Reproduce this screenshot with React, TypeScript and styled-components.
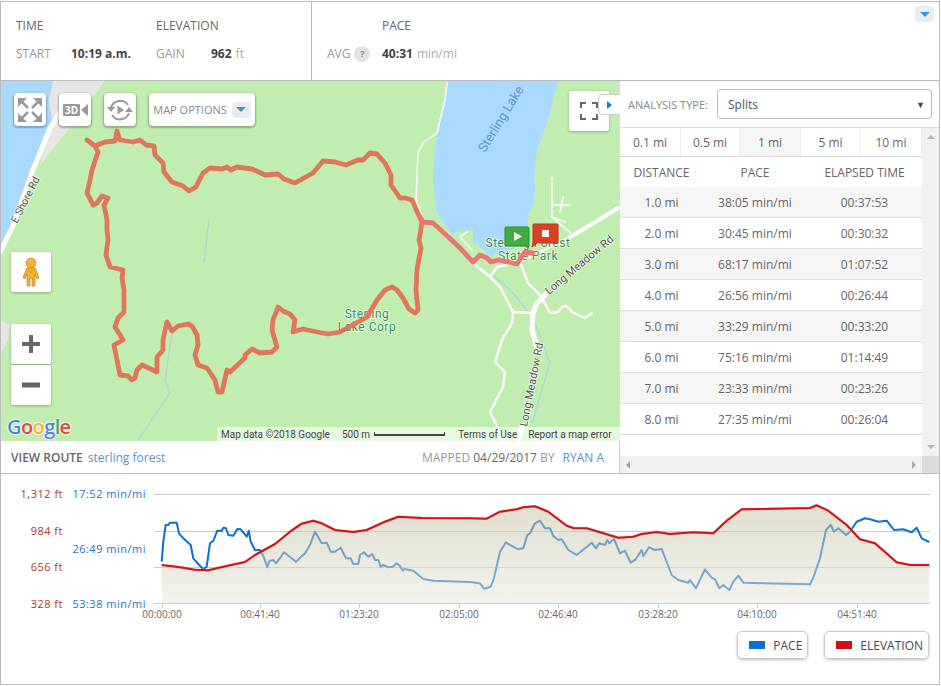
import styled, { createGlobalStyle } from "styled-components";

const splits = [
  ["1.0 mi", "38:05 min/mi", "00:37:53"],
  ["2.0 mi", "30:45 min/mi", "00:30:32"],
  ["3.0 mi", "68:17 min/mi", "01:07:52"],
  ["4.0 mi", "26:56 min/mi", "00:26:44"],
  ["5.0 mi", "33:29 min/mi", "00:33:20"],
  ["6.0 mi", "75:16 min/mi", "01:14:49"],
  ["7.0 mi", "23:33 min/mi", "00:23:26"],
  ["8.0 mi", "27:35 min/mi", "00:26:04"],
];

const tabs = ["0.1 mi", "0.5 mi", "1 mi", "5 mi", "10 mi"];
const ticks: [number, string][] = [
  [162, "00:00:00"],
  [260, "00:41:40"],
  [359, "01:23:20"],
  [459, "02:05:00"],
  [558, "02:46:40"],
  [658, "03:28:20"],
  [757, "04:10:00"],
  [857, "04:51:40"],
];

const trail =
  "M87 140 L95 146 L105 142 L115 141 L117 131 L120 140 L133 142 L140 140 L146 145 L154 146 L155 155 L163 163 L164 172 L172 182 L183 186 L189 191 L196 187 L203 173 L210 168 L222 169 L227 167 L231 170 L237 167 L252 169 L265 175 L278 174 L284 179 L295 183 L304 178 L313 173 L323 161 L335 162 L346 165 L358 160 L363 160 L370 153 L377 154 L385 163 L391 175 L391 185 L400 198 L405 198 L412 200 L420 218 L422 222 L420 235 L419 240 L421 248 L417 270 L416 290 L417 300 L418 310 L415 313 L409 309 L403 298 L397 290 L392 287 L385 290 L377 300 L367 317 L340 332 L328 334 L317 332 L303 329 L293 332 L295 320 L290 314 L283 311 L278 307 L273 320 L272 330 L277 347 L272 352 L260 353 L252 349 L245 355 L245 358 L230 372 L227 370 L222 392 L218 392 L215 380 L207 368 L198 365 L195 355 L198 345 L197 335 L192 326 L188 324 L178 326 L172 331 L167 322 L163 340 L163 350 L157 357 L157 372 L142 365 L137 370 L135 378 L132 380 L128 376 L120 375 L115 350 L114 345 L123 340 L115 327 L118 318 L124 312 L124 290 L122 278 L123 270 L110 267 L106 255 L108 240 L107 230 L107 220 L104 205 L108 198 L102 196 L97 203 L93 205 L87 193 L90 180 L92 170 L98 152 L95 146";
const trailEnd =
  "M420 217 L423 222 L433 223 L443 232 L460 248 L473 262 L480 255 L487 258 L491 262 L498 260 L517 264 L523 255 L525 252 L533 253";

const elevationPts = [
  [485, 255], [540, 262], [585, 269], [625, 271], [650, 265], [690, 256], [735, 246], [765, 225], [825, 192], [870, 155], [905, 131], [940, 122], [965, 130], [1005, 150], [1060, 156], [1100, 150], [1155, 125], [1195, 110], [1265, 114], [1410, 115],
  [1460, 116], [1500, 95], [1550, 88], [1570, 82], [1605, 79], [1645, 95], [1700, 137], [1720, 144], [1760, 145], [1810, 160], [1855, 173], [1900, 170], [1925, 162], [1970, 156], [2010, 162], [2080, 157], [2140, 160], [2180, 122], [2225, 88], [2430, 84], [2450, 76], [2485, 92], [2540, 135], [2580, 178], [2625, 190], [2690, 247], [2730, 255], [2788, 255],
];
const pacePts = [
  [485, 245], [490, 185], [497, 135], [505, 135], [510, 128], [530, 128], [537, 160], [550, 175], [572, 195], [580, 235], [595, 252], [610, 268], [620, 260], [630, 190], [640, 183], [652, 152], [665, 152], [670, 143], [678, 145], [685, 165], [700, 167], [712, 147], [722, 148], [732, 160], [740, 170], [746, 152], [752, 185], [765, 210], [780, 210], [790, 228], [802, 262], [808, 243], [820, 240], [828, 250], [852, 217], [875, 235], [888, 245], [915, 220], [930, 195], [945, 155], [965, 190], [980, 188], [992, 215], [1005, 215], [1022, 203], [1038, 235], [1052, 235], [1060, 252], [1075, 252], [1080, 225], [1092, 217], [1105, 230], [1117, 222], [1125, 240], [1135, 240], [1142, 260], [1150, 255], [1165, 262], [1178, 260], [1190, 250], [1200, 258], [1208, 272], [1212, 267], [1240, 272], [1270, 297], [1300, 302], [1410, 306],
  [1440, 310], [1452, 326], [1472, 320], [1482, 295], [1500, 215], [1518, 187], [1530, 195], [1555, 208], [1570, 205], [1582, 165], [1590, 160], [1605, 130], [1620, 122], [1635, 145], [1650, 145], [1660, 168], [1675, 180], [1685, 178], [1705, 210], [1730, 225], [1755, 205], [1775, 188], [1788, 205], [1798, 190], [1815, 195], [1822, 180], [1828, 190], [1842, 177], [1860, 220], [1875, 212], [1892, 248], [1907, 238], [1925, 210], [1930, 228], [1947, 202], [1965, 210], [1985, 207], [2015, 285], [2035, 300], [2065, 308], [2070, 300], [2088, 325], [2115, 268], [2135, 293], [2145, 298], [2158, 325], [2170, 315], [2188, 330], [2200, 305], [2215, 287], [2230, 308], [2430, 313], [2440, 293], [2460, 235], [2478, 150], [2492, 135], [2502, 155], [2515, 145], [2538, 165], [2550, 155], [2570, 125], [2595, 115], [2610, 118], [2635, 125], [2660, 122], [2682, 150], [2710, 148], [2735, 157], [2750, 143], [2765, 175], [2788, 186],
];

// points were read off a 3x crop of the chart, so scale them back down
const toPath = (pts: number[][]) =>
  pts
    .map(([x, y], i) => `${i ? "L" : "M"}${(x / 3).toFixed(1)} ${(480 + y / 3).toFixed(1)}`)
    .join(" ");

const GlobalStyle = createGlobalStyle`
  body {
    margin: 0;
    padding-top: 1px;
    background: #fff;
    font-family: "Open Sans", sans-serif;
    color: #666;
  }
`;

const Frame = styled.div`
  position: relative;
  width: 940px;
  height: 684px;
  box-sizing: border-box;
  border: 1px solid #bbb;
  display: flex;
  flex-direction: column;
`;

const TopBar = styled.div`
  display: flex;
  height: 79px;
  box-sizing: border-box;
  border-bottom: 1px solid #bbb;
`;

const StatGroup = styled.div<{ $width?: number }>`
  display: flex;
  box-sizing: border-box;
  width: ${(p) => (p.$width ? `${p.$width}px` : "auto")};
  flex: ${(p) => (p.$width ? "none" : 1)};
  border-right: ${(p) => (p.$width ? "1px solid #bbb" : "none")};
  padding-top: 15px;
  padding-left: 15px;
`;

const StatColumn = styled.div<{ $width: number }>`
  width: ${(p) => p.$width}px;
  display: flex;
  flex-direction: column;
  gap: 11px;
`;

const StatHead = styled.div<{ $indent?: number }>`
  font-size: 12px;
  line-height: 17px;
  margin-left: ${(p) => p.$indent ?? 0}px;
  color: #666;
`;

const StatRow = styled.div`
  display: flex;
  align-items: center;
  font-size: 12px;
  line-height: 17px;
`;

const StatLabel = styled.span`
  width: 55px;
  color: #999;
  display: flex;
  align-items: center;
  gap: 4px;
`;

const StatValue = styled.span`
  color: #444;
  font-weight: 700;
`;

const StatUnit = styled.span`
  color: #aaa;
  margin-left: 4px;
`;

const Help = styled.span`
  width: 16px;
  height: 16px;
  border-radius: 50%;
  background: #e2e2e2;
  color: #888;
  font-size: 9px;
  font-weight: 700;
  text-align: center;
  line-height: 15px;
`;

const ChevronChip = styled.div<{ $corner?: boolean }>`
  width: 19px;
  height: 16px;
  border-radius: 4px;
  background: #e9edf0;
  display: flex;
  align-items: center;
  justify-content: center;
  ${(p) => (p.$corner ? "position: absolute; top: 4px; right: 5px;" : "")}

  &::after {
    content: "";
    border-left: 5px solid transparent;
    border-right: 5px solid transparent;
    border-top: 5px solid #3a97d4;
  }
`;

const MiddleRow = styled.div`
  display: flex;
  height: 393px;
  box-sizing: border-box;
  border-bottom: 1px solid #bbb;
`;

const LeftColumn = styled.div`
  width: 619px;
  display: flex;
  flex-direction: column;
`;

const MapArea = styled.div`
  position: relative;
  width: 619px;
  height: 360px;
  overflow: hidden;
  background: #c1eeb0;
`;

const MapDrawing = styled.svg`
  display: block;
`;

const MapButtons = styled.div`
  position: absolute;
  top: 12px;
  left: 13px;
  display: flex;
  gap: 13px;
`;

const MapButton = styled.div`
  height: 33px;
  min-width: 32px;
  box-sizing: border-box;
  background: #fff;
  border-radius: 4px;
  box-shadow: 0 1px 2px 1px rgba(0, 0, 0, 0.28);
  display: flex;
  align-items: center;
  justify-content: center;
  gap: 5px;
  font-size: 11px;
  color: #888;
`;

const OptionsButton = styled(MapButton)`
  width: 106px;
`;

const ControlBox = styled.div<{ $top: number; $left: number }>`
  position: absolute;
  top: ${(p) => p.$top}px;
  left: ${(p) => p.$left}px;
  width: 40px;
  height: 40px;
  background: #fff;
  border-radius: 2px;
  box-shadow: 0 1px 3px rgba(0, 0, 0, 0.3);
  display: flex;
  align-items: center;
  justify-content: center;
`;

const ZoomStack = styled.div`
  position: absolute;
  top: 243px;
  left: 10px;
  display: flex;
  flex-direction: column;
  gap: 1px;
`;

const ZoomButton = styled.div`
  width: 40px;
  height: 40px;
  background: #fff;
  border-radius: 2px;
  box-shadow: 0 1px 3px rgba(0, 0, 0, 0.3);
  display: flex;
  align-items: center;
  justify-content: center;
`;

const PanelTab = styled.div`
  position: absolute;
  top: 13px;
  right: 0;
  width: 22px;
  height: 21px;
  box-sizing: border-box;
  background: #fff;
  border: 1px solid #ccc;
  border-right: none;
  border-radius: 5px 0 0 5px;
  padding-left: 8px;
  display: flex;
  align-items: center;

  &::after {
    content: "";
    border-top: 4px solid transparent;
    border-bottom: 4px solid transparent;
    border-left: 5px solid #1a7fb0;
  }
`;

const GoogleLogo = styled.div`
  position: absolute;
  left: 6px;
  bottom: 1px;
  font-family: "Open Sans", sans-serif;
  font-size: 20px;
  line-height: 26px;
  font-weight: 600;
  letter-spacing: -0.6px;
  text-shadow: 0 0 2px #fff, 0 0 2px #fff, 0 0 2px #fff;
`;

const LogoLetter = styled.span<{ $color: string }>`
  color: ${(p) => p.$color};
`;

const Attribution = styled.div`
  position: absolute;
  right: 0;
  bottom: 0;
  width: 403px;
  height: 14px;
  box-sizing: border-box;
  padding-left: 4px;
  background: rgba(255, 255, 255, 0.6);
  display: flex;
  align-items: center;
  font-family: Roboto, sans-serif;
  font-size: 10px;
  color: #444;
  white-space: nowrap;
`;

const AttributionPart = styled.span<{ $width: number }>`
  width: ${(p) => p.$width}px;
  flex: none;
`;

const ScaleBar = styled.span`
  width: 71px;
  height: 4px;
  flex: none;
  margin: 0 13px 0 4px;
  box-sizing: border-box;
  border: 1px solid #444;
  border-top: none;
  border-bottom-width: 2px;
`;

const RouteBar = styled.div`
  flex: 1;
  display: flex;
  align-items: center;
  justify-content: space-between;
  padding: 0 15px 0 10px;
  border-right: 1px solid #ccc;
  font-size: 12px;
`;

const RouteTitle = styled.span`
  color: #666;
  font-weight: 600;
  margin-right: 5px;
`;

const BlueLink = styled.span<{ $gap?: number }>`
  color: #5a93c8;
  margin-left: ${(p) => p.$gap ?? 0}px;
`;

const Muted = styled.span`
  color: #999;
`;

const RightColumn = styled.div`
  width: 319px;
  display: flex;
  flex-direction: column;
`;

const AnalysisRow = styled.div`
  height: 47px;
  flex: none;
  box-sizing: border-box;
  display: flex;
  align-items: center;
  border-bottom: 1px solid #ddd;
  padding: 0 7px 0 8px;
  gap: 8px;
`;

const AnalysisLabel = styled.span`
  font-size: 11px;
  color: #888;
  white-space: nowrap;
  width: 81px;
`;

const SelectBox = styled.div`
  flex: 1;
  height: 30px;
  box-sizing: border-box;
  border: 1px solid #bbb;
  border-radius: 4px;
  display: flex;
  align-items: center;
  justify-content: space-between;
  padding: 0 6px 0 10px;
  font-size: 12px;
  color: #555;
`;

const SelectCaret = styled.span`
  font-size: 9px;
  color: #444;
`;

const ScrollFrame = styled.div`
  flex: 1;
  display: grid;
  grid-template-columns: 302px 17px;
  grid-template-rows: 328px 17px;
`;

const TableArea = styled.div`
  overflow: hidden;
`;

const TabRow = styled.div`
  display: grid;
  grid-template-columns: 61px 59px 61px 60px 61px;
  height: 29px;
  box-sizing: border-box;
  border-bottom: 1px solid #ddd;
`;

const Tab = styled.div<{ $active?: boolean }>`
  display: flex;
  align-items: center;
  justify-content: center;
  font-size: 12px;
  color: #666;
  background: ${(p) => (p.$active ? "#f5f5f5" : "#fff")};
  border-right: 1px solid #eee;
`;

const SplitRow = styled.div<{ $head?: boolean; $shaded?: boolean }>`
  display: grid;
  grid-template-columns: 83px 104px 115px;
  height: ${(p) => (p.$head ? "30px" : "31px")};
  box-sizing: border-box;
  align-items: center;
  text-align: center;
  font-size: 12px;
  color: #666;
  background: ${(p) => (p.$shaded ? "#f5f5f5" : "#fff")};
  border-bottom: ${(p) => (p.$head ? "none" : "1px solid #ddd")};
`;

const ScrollTrack = styled.div<{ $horizontal?: boolean }>`
  background: #f1f1f1;
  display: flex;
  flex-direction: ${(p) => (p.$horizontal ? "row" : "column")};
  align-items: center;
  justify-content: space-between;
  padding: ${(p) => (p.$horizontal ? "0 6px" : "7px 0")};
`;

const ScrollArrow = styled.span<{ $dir: "up" | "down" | "left" | "right" }>`
  width: 0;
  height: 0;
  border: 4px solid transparent;
  ${(p) => (p.$dir === "up" ? "border-bottom-color: #b5b5b5; border-top-width: 0;" : "")}
  ${(p) => (p.$dir === "down" ? "border-top-color: #b5b5b5; border-bottom-width: 0;" : "")}
  ${(p) => (p.$dir === "left" ? "border-right-color: #a5a5a5; border-left-width: 0;" : "")}
  ${(p) => (p.$dir === "right" ? "border-left-color: #a5a5a5; border-right-width: 0;" : "")}
`;

const ScrollCorner = styled.div`
  background: #dcdcdc;
`;

const ChartSection = styled.div`
  flex: 1;
  display: flex;
  flex-direction: column;
`;

const ChartDrawing = styled.svg`
  display: block;
  font-family: "Open Sans", sans-serif;
`;

const Legend = styled.div`
  display: flex;
  justify-content: flex-end;
  gap: 16px;
  padding: 7px 10px 0 0;
`;

const LegendButton = styled.div`
  height: 28px;
  box-sizing: border-box;
  padding: 0 5px 0 11px;
  display: flex;
  align-items: center;
  gap: 8px;
  border: 1px solid #ccc;
  border-radius: 5px;
  box-shadow: 0 1px 3px rgba(0, 0, 0, 0.25);
  font-size: 12px;
  color: #3a4a5a;
`;

const Swatch = styled.span<{ $color: string }>`
  width: 16px;
  height: 8px;
  background: ${(p) => p.$color};
`;

const MapSvg = () => (
  <MapDrawing width={619} height={360} viewBox="1 81 619 360">
    {/* water */}
    <path d="M0 81 L53 81 L49 100 L52 120 L40 150 L28 190 L12 228 L0 250 Z" fill="#aadaff" />
    <path d="M447 81 L558 81 L548 120 L537 150 L534 175 L535 190 L533 205 L528 215 L528 235 L525 245 L490 256 L478 245 L473 243 L473 230 L455 232 L453 236 L437 213 L433 180 L435 150 L437 135 L445 100 Z" fill="#aadaff" />
    <path d="M53 81 L105 81 L70 128 L40 165 L50 128 L52 120 L49 100 Z" fill="#e6e6e6" />
    <path d="M0 320 L10 325 L8 340 L0 355 Z" fill="#e6e6e6" />
    {/* streams */}
    <g fill="none" stroke="#a8d9dc" strokeWidth="1.3">
      <path d="M209 220 L204 262" />
      <path d="M172 333 L165 380 L170 393 L138 440" />
      <path d="M493 275 L513 293 L533 318 L550 362 L532 423" />
    </g>
    {/* roads */}
    <g fill="none" stroke="#fff" strokeLinejoin="round" strokeLinecap="round">
      <path d="M0 252 L12 228 L33 170 L50 128 L62 110" strokeWidth="5" />
      <path d="M618 208 L587 227 L570 237" strokeWidth="4" />
      <path d="M547 293 L537 303 L533 313 L532 330 L538 351 M522 426 L518 441" strokeWidth="5" />
      <g strokeWidth="2.4">
        <path d="M473 263 L490 277 L500 287 L513 312 L532 313 M513 312 L512 323 L502 340 L495 362 L505 372 L503 387 L490 412 L498 428 L502 440" />
        <path d="M490 277 L497 267 L520 262 L528 283 L540 295 L543 300 L550 313 L558 312 L561 308 Q565 304 569 308 L572 312 L585 318 L592 313" />
        <path d="M520 262 L570 237" />
      </g>
      <g strokeWidth="1.5">
        <path d="M447 83 L445 100 L437 133 L424 142 L418 152 L416 200 L422 217" />
        <path d="M467 232 L460 237 L472 250" />
        <path d="M552 178 L552 217 L573 235 M553 205 L570 205 M563 197 L560 212 M552 217 L565 222" />
      </g>
    </g>
    {/* labels, the trail runs over them */}
    <g fontFamily="Roboto, sans-serif" fontSize="11" paintOrder="stroke" stroke="#fff" strokeWidth="1.5" strokeOpacity="0.8">
      <text transform="translate(485 153) rotate(-58.5)" fill="#5a97c9" fontSize="13" stroke="none">Sterling Lake</text>
      <text transform="translate(17 224) rotate(-63)" fill="#555" fontSize="10.5">E Shore Rd</text>
      <text transform="translate(62 94) rotate(72)" fill="#555">e A</text>
      <text transform="translate(549 295) rotate(-40)" fill="#555">Long Meadow Rd</text>
      <text transform="translate(527 427) rotate(-79)" fill="#555">Long Meadow Rd</text>
      <g fill="#3c8f55" fontSize="12" letterSpacing="0.5" textAnchor="middle">
        <text x="367" y="318">Sterling</text>
        <text x="367" y="331">Lake Corp</text>
        <text x="528" y="246.5">Sterling Forest</text>
        <text x="528" y="259.5">State Park</text>
      </g>
    </g>
    {/* trail */}
    <g fill="none" strokeLinejoin="round" strokeLinecap="round" strokeWidth="4.8">
      <path d={trail} stroke="#e0775a" />
      <path d={trailEnd} stroke="#ec7675" />
    </g>
    {/* start and stop flags */}
    <path d="M506 227 H528 a1 1 0 0 1 1 1 V246 L528 248 L525 246 H506 a1 1 0 0 1 -1 -1 V228 a1 1 0 0 1 1 -1 Z" fill="#3fae3f" stroke="#2d8f2d" />
    <path d="M514 232 L514 241 L522 236.5 Z" fill="#fff" />
    <path d="M534 224 H557 a1 1 0 0 1 1 1 V242 a1 1 0 0 1 -1 1 H537 L532 247 L533 243 V225 a1 1 0 0 1 1 -1 Z" fill="#dc3f22" stroke="#c2341b" />
    <rect x="542" y="230" width="7" height="7" fill="#fff" />
  </MapDrawing>
);

const ExpandIcon = () => (
  <svg width="32" height="32" viewBox="0 0 32 32" fill="#999" stroke="#999">
    <path d="M4 4 H13 L4 13 Z M28 4 H19 L28 13 Z M4 28 H13 L4 19 Z M28 28 H19 L28 19 Z" strokeWidth="0" />
    <path d="M7 7 L14 14 M25 7 L18 14 M7 25 L14 18 M25 25 L18 18" strokeWidth="2.5" fill="none" />
  </svg>
);

const CameraIcon = () => (
  <svg width="32" height="32" viewBox="0 0 32 32">
    <rect x="4" y="10" width="17" height="12" rx="1" fill="#999" />
    <path d="M22 16 L29 10 V22 Z" fill="#999" />
    <text x="12.5" y="20" fontSize="10" fontWeight="700" fill="#fff" textAnchor="middle" fontFamily="Open Sans, sans-serif">3D</text>
  </svg>
);

const ReplayIcon = () => (
  <svg width="32" height="32" viewBox="0 0 32 32" fill="none" stroke="#999" strokeWidth="2">
    <path d="M7 14 A9.5 9.5 0 0 1 24 11 M25 19 A9.5 9.5 0 0 1 8 21" />
    <path d="M3 13 H11 L7 18 Z M21 18 H29 L25 13 Z" fill="#999" stroke="none" />
    <path d="M13.5 11.5 V20.5 L20 16 Z" fill="#999" stroke="none" />
  </svg>
);

const FullscreenIcon = () => (
  <svg width="18" height="18" viewBox="0 0 18 18" fill="none" stroke="#666" strokeWidth="2">
    <path d="M1 6 V1 H6 M12 1 H17 V6 M1 12 V17 H6 M12 17 H17 V12" />
  </svg>
);

const PegmanIcon = () => (
  <svg width="18" height="30" viewBox="0 0 18 30" fill="#f5b32a" stroke="#a9803a" strokeWidth="0.6">
    <circle cx="9" cy="6" r="5" />
    <path d="M4.5 11 H13.5 L17 21 L15 22 L13 17 V29 H10 V21 H8 V29 H5 V17 L3 22 L1 21 Z" />
    <path d="M6 11.5 L9 16 L12 11.5" fill="none" stroke="#d98a1f" />
  </svg>
);

const PlusIcon = () => (
  <svg width="18" height="18" viewBox="0 0 18 18" fill="#666">
    <path d="M7 0 H11 V7 H18 V11 H11 V18 H7 V11 H0 V7 H7 Z" />
  </svg>
);

const MinusIcon = () => (
  <svg width="18" height="18" viewBox="0 0 18 18" fill="#666">
    <rect x="0" y="6.5" width="18" height="5" />
  </svg>
);

const ElevationChart = () => {
  const elevation = toPath(elevationPts);
  return (
    <ChartDrawing width={938} height={150} viewBox="1 474 938 150">
      <defs>
        <linearGradient id="areaFill" x1="0" y1="0" x2="0" y2="1">
          <stop offset="0" stopColor="#c4c2a3" stopOpacity="0.52" />
          <stop offset="1" stopColor="#e8e6dd" stopOpacity="0.52" />
        </linearGradient>
      </defs>
      <g stroke="#ccc" strokeWidth="1">
        <line x1="154" x2="930" y1="494.5" y2="494.5" />
        <line x1="154" x2="930" y1="531.5" y2="531.5" />
        <line x1="154" x2="930" y1="567.5" y2="567.5" />
      </g>
      <path d={toPath(pacePts)} fill="none" stroke="#0b6fd4" strokeWidth="2" strokeLinejoin="round" />
      <path d={`${elevation} L929.3 603 L161.7 603 Z`} fill="url(#areaFill)" />
      <path d={elevation} fill="none" stroke="#f2a0a0" strokeWidth="3" strokeLinejoin="round" opacity="0.5" />
      <path d={elevation} fill="none" stroke="#c8151b" strokeWidth="2" strokeLinejoin="round" />
      <line x1="154" x2="930" y1="603.5" y2="603.5" stroke="#c0d0e0" />
      {ticks.map(([x, label]) => (
        <g key={label}>
          <line x1={x + 0.5} x2={x + 0.5} y1="603" y2="608" stroke="#c0d0e0" />
          <text x={x} y="618" fontSize="10" fill="#666" textAnchor="middle">{label}</text>
        </g>
      ))}
      <g fontSize="11" letterSpacing="0.5" fill="#b53232" textAnchor="end">
        <text x="63" y="498">1,312 ft</text>
        <text x="63" y="535">984 ft</text>
        <text x="63" y="571">656 ft</text>
        <text x="63" y="608">328 ft</text>
      </g>
      <g fontSize="11" letterSpacing="0.5" fill="#2a70c0" textAnchor="end">
        <text x="146" y="498">17:52 min/mi</text>
        <text x="146" y="553">26:49 min/mi</text>
        <text x="146" y="608">53:38 min/mi</text>
      </g>
    </ChartDrawing>
  );
};

const App = () => {
  return (
    <>
      <GlobalStyle />
      <Frame>
        <TopBar>
          <StatGroup $width={311}>
            <StatColumn $width={140}>
              <StatHead>TIME</StatHead>
              <StatRow>
                <StatLabel>START</StatLabel>
                <StatValue>10:19 a.m.</StatValue>
              </StatRow>
            </StatColumn>
            <StatColumn $width={140}>
              <StatHead>ELEVATION</StatHead>
              <StatRow>
                <StatLabel>GAIN</StatLabel>
                <StatValue>962</StatValue>
                <StatUnit>ft</StatUnit>
              </StatRow>
            </StatColumn>
          </StatGroup>
          <StatGroup>
            <StatColumn $width={200}>
              <StatHead $indent={55}>PACE</StatHead>
              <StatRow>
                <StatLabel>
                  AVG <Help>?</Help>
                </StatLabel>
                <StatValue>40:31</StatValue>
                <StatUnit>min/mi</StatUnit>
              </StatRow>
            </StatColumn>
          </StatGroup>
          <ChevronChip $corner />
        </TopBar>
        <MiddleRow>
          <LeftColumn>
            <MapArea>
              <MapSvg />
              <MapButtons>
                <MapButton><ExpandIcon /></MapButton>
                <MapButton><CameraIcon /></MapButton>
                <MapButton><ReplayIcon /></MapButton>
                <OptionsButton>
                  MAP OPTIONS
                  <ChevronChip />
                </OptionsButton>
              </MapButtons>
              <ControlBox $top={10} $left={568}><FullscreenIcon /></ControlBox>
              <ControlBox $top={171} $left={10}><PegmanIcon /></ControlBox>
              <ZoomStack>
                <ZoomButton><PlusIcon /></ZoomButton>
                <ZoomButton><MinusIcon /></ZoomButton>
              </ZoomStack>
              <PanelTab />
              <GoogleLogo>
                <LogoLetter $color="#4f86e0">G</LogoLetter>
                <LogoLetter $color="#e0483a">o</LogoLetter>
                <LogoLetter $color="#f2b92b">o</LogoLetter>
                <LogoLetter $color="#4f86e0">g</LogoLetter>
                <LogoLetter $color="#3fa757">l</LogoLetter>
                <LogoLetter $color="#e0483a">e</LogoLetter>
              </GoogleLogo>
              <Attribution>
                <AttributionPart $width={121}>Map data ©2018 Google</AttributionPart>
                <span>500 m</span>
                <ScaleBar />
                <AttributionPart $width={70}>Terms of Use</AttributionPart>
                <AttributionPart $width={90}>Report a map error</AttributionPart>
              </Attribution>
            </MapArea>
            <RouteBar>
              <span>
                <RouteTitle>VIEW ROUTE</RouteTitle>
                <BlueLink>sterling forest</BlueLink>
              </span>
              <span>
                <Muted>MAPPED</Muted> 04/29/2017 <Muted>BY</Muted>
                <BlueLink $gap={8}>RYAN A</BlueLink>
              </span>
            </RouteBar>
          </LeftColumn>
          <RightColumn>
            <AnalysisRow>
              <AnalysisLabel>ANALYSIS TYPE:</AnalysisLabel>
              <SelectBox>
                Splits
                <SelectCaret>▼</SelectCaret>
              </SelectBox>
            </AnalysisRow>
            <ScrollFrame>
              <TableArea>
                <TabRow>
                  {tabs.map((t) => (
                    <Tab key={t} $active={t === "1 mi"}>{t}</Tab>
                  ))}
                </TabRow>
                <SplitRow $head>
                  <span>DISTANCE</span>
                  <span>PACE</span>
                  <span>ELAPSED TIME</span>
                </SplitRow>
                {splits.map((row, i) => (
                  <SplitRow key={row[0]} $shaded={i % 2 === 0}>
                    {row.map((cell) => (
                      <span key={cell}>{cell}</span>
                    ))}
                  </SplitRow>
                ))}
              </TableArea>
              <ScrollTrack>
                <ScrollArrow $dir="up" />
                <ScrollArrow $dir="down" />
              </ScrollTrack>
              <ScrollTrack $horizontal>
                <ScrollArrow $dir="left" />
                <ScrollArrow $dir="right" />
              </ScrollTrack>
              <ScrollCorner />
            </ScrollFrame>
          </RightColumn>
        </MiddleRow>
        <ChartSection>
          <ElevationChart />
          <Legend>
            <LegendButton>
              <Swatch $color="#0b6fd4" />
              PACE
            </LegendButton>
            <LegendButton>
              <Swatch $color="#d01018" />
              ELEVATION
            </LegendButton>
          </Legend>
        </ChartSection>
      </Frame>
    </>
  );
};

export default App;
